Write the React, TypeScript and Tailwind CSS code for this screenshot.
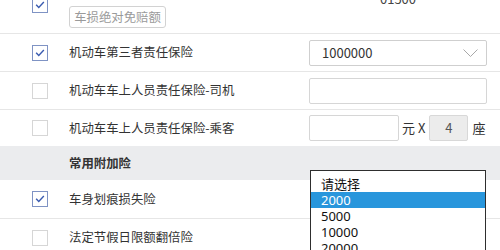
const CJK = "font-['Microsoft_YaHei','Noto_Sans_CJK_SC',sans-serif]"

function Check({ checked }: { checked?: boolean }) {
  return (
    <span
      className={`flex h-4 w-4 items-center justify-center border bg-white ${
        checked ? 'border-[#7f93c4]' : 'border-[#d6d6d6]'
      }`}
    >
      {checked && (
        <svg viewBox="0 0 16 16" className="h-4 w-4" fill="none">
          <path d="M3.6 7.6 L6.6 10.8 L12.4 4.6" stroke="#3a5bb0" strokeWidth="1.6" />
        </svg>
      )}
    </span>
  )
}

function Row({
  checked,
  name,
  children,
  className = 'h-[38px] border-b border-[#e6e6e6]',
}: {
  checked?: boolean
  name: string
  children?: React.ReactNode
  className?: string
}) {
  return (
    <div className={`flex items-center ${className}`}>
      <div className="w-[69px] shrink-0 pl-8">
        <Check checked={checked} />
      </div>
      <div className="flex-1 text-[12.4px] text-[#333]">{name}</div>
      <div className="flex w-[191px] shrink-0 items-center pr-[13px]">{children}</div>
    </div>
  )
}

export default function App() {
  return (
    <div className={`relative h-[250px] w-[500px] overflow-hidden bg-white ${CJK}`}>
      {/* first row is scrolled mostly out of view */}
      <div className="-mt-[29px] flex h-[63px] border-b border-[#e6e6e6]">
        <div className="w-[69px] shrink-0 pl-8 pt-[26px]">
          <Check checked />
        </div>
        <div className="flex flex-1 flex-col items-start pt-[10px]">
          <span className="block text-[12.4px] leading-[18px] text-[#333]">机动车损失保险</span>
          <button
            type="button"
            className="mt-[7px] h-[22px] w-[97px] rounded-[3px] border border-[#d2d2d2] bg-white text-[12.4px] text-[#9a9a9a]"
          >
            车损绝对免赔额
          </button>
        </div>
        <div className="w-[191px] shrink-0 pr-[13px] pt-[19px] text-center text-[13px] leading-[18px] text-[#444]">
          01500
        </div>
      </div>

      <Row checked name="机动车第三者责任保险">
        <div className="flex h-[26px] w-[178px] items-center justify-between rounded-[2px] border border-[#cfcfcf] bg-white pl-[12px] pr-[8px] text-[13px] text-[#333]">
          <span>1000000</span>
          <svg width="15" height="8" viewBox="0 0 15 8" fill="none">
            <path d="M0.5 0.5 L7.5 7.5 L14.5 0.5" stroke="#a8a8a8" strokeWidth="1" />
          </svg>
        </div>
      </Row>

      <Row name="机动车车上人员责任保险-司机">
        <div className="h-[26px] w-[178px] rounded-[2px] border border-[#d6d6d6] bg-white" />
      </Row>

      <Row name="机动车车上人员责任保险-乘客" className="h-[36px]">
        <div className="h-[26px] w-[90px] rounded-[2px] border border-[#d6d6d6] bg-white" />
        <span className="ml-[3px] text-[13px] text-[#333]">元 X</span>
        <div className="ml-[4px] flex h-[26px] w-[39px] items-center justify-center rounded-[2px] border border-[#d8d8d8] bg-[#ececec] text-[13px] text-[#555]">
          4
        </div>
        <span className="ml-[4px] text-[13px] text-[#333]">座</span>
      </Row>

      <div className="flex h-[34px] items-center bg-[#ebecee] pl-[69px] text-[12.4px] font-bold text-[#333]">
        常用附加险
      </div>

      <Row checked name="车身划痕损失险" className="h-[39px] border-b border-[#e6e6e6]" />
      <Row name="法定节假日限额翻倍险" />

      {/* open native select list */}
      <div className="absolute left-[310px] top-[170px] w-[176px] border border-[#2e2e2e] bg-white pt-[5px] pb-[2px] font-['Noto_Sans','Noto_Sans_CJK_SC',sans-serif] text-[13px] text-[#111]">
        {['请选择', '2000', '5000', '10000', '20000', '50000'].map((opt) => (
          <div
            key={opt}
            className={`flex h-[16px] items-center overflow-hidden pl-[10px] leading-[16px] ${
              opt === '2000' ? 'bg-[#2896dc] text-white' : ''
            }`}
          >
            {opt}
          </div>
        ))}
      </div>
    </div>
  )
}
